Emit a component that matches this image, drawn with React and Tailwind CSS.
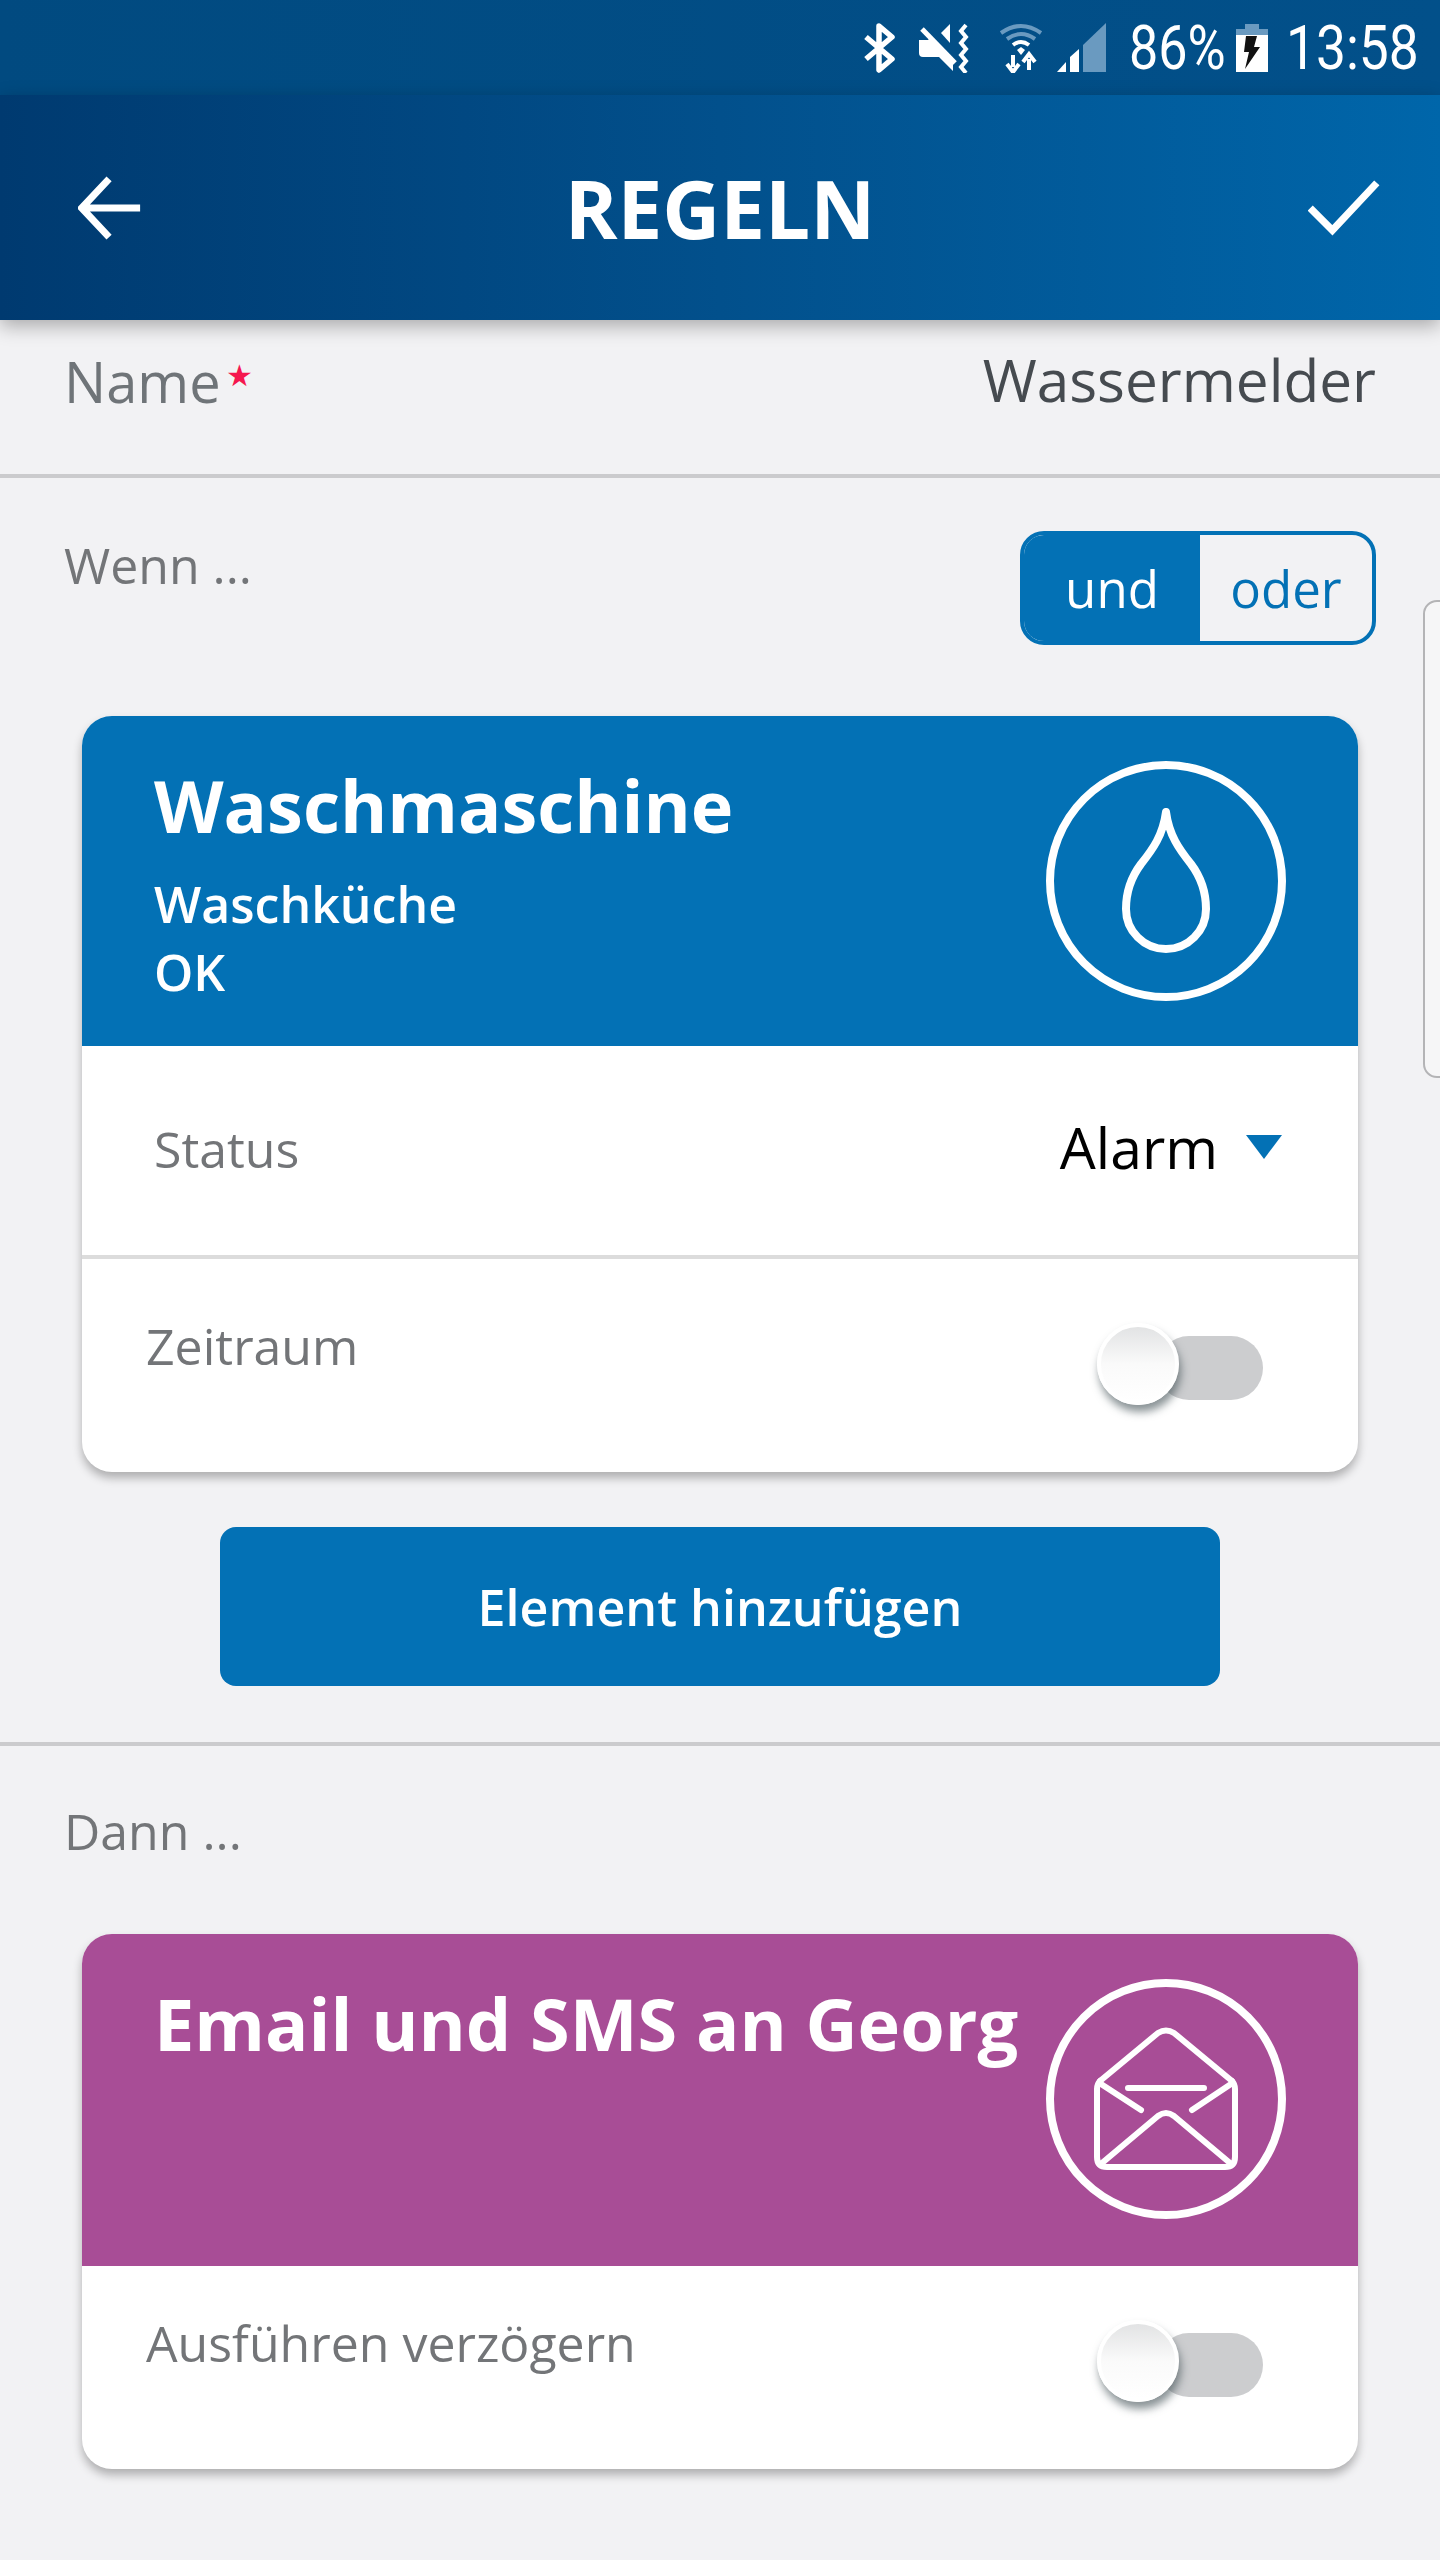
const font = { fontFamily: '"Open Sans", sans-serif' };

function Toggle({ className }) {
  return (
    <div className={`relative w-[166px] h-[84px] ${className}`}>
      <div className="absolute left-[60px] right-0 top-[13px] h-[64px] rounded-full bg-[#cccdcf]" />
      <div className="absolute left-0 top-0 w-[82px] h-[82px] rounded-full border-[4px] border-white bg-gradient-to-b from-[#e2e3e4] via-[#fafafa] to-white shadow-[2px_7px_8px_rgba(60,75,80,0.6)]" />
    </div>
  );
}

function Circle({ children }) {
  return (
    <svg width="240" height="240" viewBox="0 0 240 240" fill="none" stroke="white" strokeLinecap="round" strokeLinejoin="round" className="shrink-0">
      <circle cx="120" cy="120" r="116" strokeWidth="8" />
      {children}
    </svg>
  );
}

function StatusBar() {
  return (
    <div className="h-[95px] bg-gradient-to-r from-[#014a80] to-[#02508a] flex items-center justify-end pr-[24px] text-white" style={{ fontFamily: 'Roboto, sans-serif' }}>
      <svg width="32" height="50" viewBox="0 0 32 50" fill="none" stroke="white" strokeWidth="5.5" className="mr-[23px]">
        <path d="M2 14 L28 36 L15 47 V3 L28 14 L2 36" strokeLinejoin="round" />
      </svg>
      <svg width="52" height="50" viewBox="0 0 52 50" className="mr-[28px]">
        <path d="M0 17 H9 L12 14 L34 38 V48 L20 34 H4 Q0 34 0 30 Z" fill="white" />
        <path d="M22 10 L31 1 V20 Z" fill="white" />
        <path d="M3 6 L36 40" stroke="white" strokeWidth="5" fill="none" />
        <path d="M47 2 L42 8 L47 14 L42 20 L47 26 L42 32 L47 38 L42 44 L47 50" stroke="white" strokeWidth="4" fill="none" />
      </svg>
      <svg width="44" height="50" viewBox="0 0 44 50" fill="none" className="mr-[14px]">
        <path d="M2 10 Q22 -4 42 10" stroke="#6a9ac0" strokeWidth="4" />
        <path d="M8 16 Q22 6 36 16" stroke="#6a9ac0" strokeWidth="4" />
        <path d="M14 22 Q22 16 30 22" stroke="white" strokeWidth="4" />
        <path d="M18 27 L22 24 L26 27 L22 32 Z" fill="white" />
        <path d="M14 32 V44 M8 41 L14 49 L20 41" stroke="white" strokeWidth="4" />
        <path d="M30 47 V36 M24 39 L30 31 L36 39" stroke="white" strokeWidth="4" />
      </svg>
      <svg width="49" height="50" viewBox="0 0 49 50" className="mr-[23px]">
        <path d="M0 49 L9 39 V49 Z" fill="white" />
        <path d="M13 49 V34 L22 26 V49 Z" fill="white" />
        <path d="M26 22 L49 0 V49 H26 Z" fill="#6a9ac0" />
      </svg>
      <span className="inline-block text-[62px] leading-none w-[94px] scale-x-[0.84] origin-left whitespace-nowrap mr-[13px]">86%</span>
      <svg width="32" height="50" viewBox="0 0 32 50" className="mr-[18px]">
        <rect x="9" y="1" width="14" height="6" fill="#6a9ac0" />
        <rect x="0" y="6" width="32" height="6" fill="#6a9ac0" />
        <rect x="0" y="12" width="32" height="37" fill="white" />
        <path d="M10 13 H21 L18 24 H24 L9 46 L13 29 H8 Z" fill="#111" />
      </svg>
      <span className="inline-block text-[62px] leading-none w-[130px] scale-x-[0.86] origin-left whitespace-nowrap">13:58</span>
    </div>
  );
}

export default function App() {
  return (
    <div className="relative w-[1440px] h-[2560px] overflow-hidden bg-[#f2f2f4]" style={font}>
      <StatusBar />

      <header className="relative z-10 h-[225px] bg-gradient-to-r from-[#003a70] via-[#02508c] to-[#0066aa] flex items-center pl-[78px] pr-[60px] shadow-[0_6px_18px_rgba(0,0,0,0.3)]">
        <div className="flex-1">
          <svg width="64" height="64" viewBox="0 0 68 68" fill="none" stroke="white" strokeWidth="7.5">
            <path d="M66 34 H6 M33 3 L4 34 L33 65" />
          </svg>
        </div>
        <h1 className="text-[80px] font-bold text-white leading-none -ml-[18px]">REGELN</h1>
        <div className="flex-1 flex justify-end">
          <svg width="72" height="56" viewBox="0 0 74 58" fill="none" stroke="white" strokeWidth="7.5">
            <path d="M2 29 L25 52 L71 3" />
          </svg>
        </div>
      </header>

      <div className="h-[158px] border-b-[4px] border-[#cbcbcd] flex items-start justify-between px-[64px] pt-[23px]">
        <div className="flex items-start text-[56px] leading-[76px] text-[#6f7478]">
          <span>Name</span>
          <span className="text-[#f5174e] text-[30px] leading-[40px] ml-[5px] mt-[12px]">★</span>
        </div>
        <div className="text-[58.5px] leading-[76px] text-[#464b50] -mt-[2px]">Wassermelder</div>
      </div>

      <div className="h-[238px] flex items-start justify-between px-[64px] pt-[52px]">
        <div className="text-[50px] leading-[70px] text-[#737578]">Wenn ...</div>
        <div className="flex w-[356px] h-[114px] mt-[1px] rounded-[24px] border-[4px] border-[#0371b5] text-[51px] overflow-hidden">
          <div className="w-[176px] bg-[#0371b5] text-white flex items-center justify-center">und</div>
          <div className="flex-1 text-[#0371b5] flex items-center justify-center">oder</div>
        </div>
      </div>

      <div className="absolute left-[1423px] top-[600px] w-[40px] h-[478px] rounded-[14px] border-[2px] border-[#b4b4b6] bg-[#f6f6f7]" />

      <section className="mx-[82px] h-[756px] rounded-[30px] bg-white overflow-hidden shadow-[0_6px_10px_rgba(0,0,0,0.28)]">
        <div className="h-[330px] bg-[#0371b5] flex justify-between pl-[72px] pr-[72px] pt-[45px] text-white">
          <div>
            <div className="text-[72px] font-bold leading-[88px]">Waschmaschine</div>
            <div className="text-[50px] font-semibold leading-[68px] mt-[21px]">Waschküche</div>
            <div className="text-[50px] font-semibold leading-[68px]">OK</div>
          </div>
          <Circle>
            <path strokeWidth="8" d="M120 51 C123 74 133 88 145 103 C154 115 160 128 160 148 A40 40 0 0 1 80 148 C80 128 86 115 95 103 C107 88 117 74 120 51 Z" />
          </Circle>
        </div>
        <div className="h-[213px] border-b-[4px] border-[#dcdcdc] flex items-start justify-between pl-[72px] pr-[76px] pt-[68px]">
          <div className="text-[50px] leading-[70px] text-[#737578]">Status</div>
          <div className="flex items-center -mt-[2px]">
            <span className="text-[57px] leading-[70px] text-black">Alarm</span>
            <svg width="36" height="24" viewBox="0 0 36 24" className="ml-[28px]"><path d="M0 0 H36 L18 24 Z" fill="#0371b5" /></svg>
          </div>
        </div>
        <div className="flex items-start justify-between pl-[64px] pr-[95px] pt-[52px]">
          <div className="text-[50px] leading-[70px] text-[#737578]">Zeitraum</div>
          <Toggle className="mt-[12px]" />
        </div>
      </section>

      <div className="flex justify-center mt-[55px]">
        <button className="w-[1000px] h-[159px] rounded-[16px] bg-[#0371b5] text-white text-[50.2px] font-semibold">Element hinzufügen</button>
      </div>

      <div className="mt-[56px] border-t-[4px] border-[#cbcbcd] h-[192px] px-[64px] pt-[50px]">
        <div className="text-[50px] leading-[70px] text-[#737578]">Dann ...</div>
      </div>

      <section className="mx-[82px] h-[535px] rounded-[30px] bg-white overflow-hidden shadow-[0_6px_10px_rgba(0,0,0,0.28)]">
        <div className="h-[332px] bg-[#a84d96] flex justify-between pl-[72px] pr-[72px] pt-[45px] text-white">
          <div className="text-[72px] font-bold leading-[88px] whitespace-nowrap">Email und SMS an Georg</div>
          <Circle>
            <g strokeWidth="6">
              <path d="M54 102 L112 54 Q120 49 128 54 L186 102" />
              <path d="M54 102 Q51 105 51 110 V178 Q51 188 61 188 H179 Q189 188 189 178 V110 Q189 105 186 102" />
              <path d="M56 184 L112 137 Q120 131 128 137 L184 184" />
              <path d="M55 105 L95 131 M185 105 L146 131 M82 109 H158" />
            </g>
          </Circle>
        </div>
        <div className="flex items-start justify-between pl-[64px] pr-[95px] pt-[42px]">
          <div className="text-[50px] leading-[70px] text-[#737578]">Ausführen verzögern</div>
          <Toggle className="mt-[12px]" />
        </div>
      </section>
    </div>
  );
}
